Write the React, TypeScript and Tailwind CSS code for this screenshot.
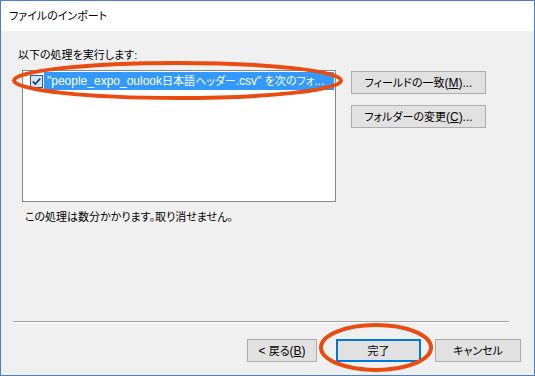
export default function App() {
  return (
    <div className="relative w-[535px] h-[376px] overflow-hidden">
      <div className="flex flex-col w-full h-full border border-[#4a7fc9] bg-[#f0f0f0] text-[11px] text-black font-['Liberation_Sans','Noto_Sans_CJK_JP',sans-serif] [font-feature-settings:'palt']">
        <div className="h-[30px] shrink-0 bg-white flex items-center pl-[8px] leading-[16px]">
          ファイルのインポート
        </div>
        <div className="flex flex-col flex-1 pt-[16px]">
          <div className="pl-[17px] leading-[16px]">以下の処理を実行します:</div>
          <div className="flex mt-[7px] pl-[21px]">
            <div className="w-[314px] h-[132px] shrink-0 bg-white border border-[#828790] pt-[1px] pl-[7px]">
              <div className="flex items-center h-[18px]">
                <svg width="13" height="13" viewBox="0 0 13 13" className="shrink-0">
                  <rect x="0.5" y="0.5" width="12" height="12" fill="#d3e5f8" stroke="#2f5684" />
                  <path d="M2.8 6.4 L5.2 9 L10.2 3.6" fill="none" stroke="#1a3b66" strokeWidth="1.6" />
                </svg>
                <div className="ml-[1px] h-[18px] w-[290px] bg-[#3399ff] text-white leading-[18px] pl-[3px] whitespace-nowrap overflow-hidden">
                  <span className="text-[12px]">"people_expo_oulook</span>日本語ヘッダー<span className="text-[12px]">.csv" </span>を次のフォ<span className="text-[12px]">...</span>
                </div>
              </div>
            </div>
            <div className="flex flex-col ml-[15px] pt-[1px] gap-[11px]">
              <button className="w-[135px] h-[23px] bg-[#e1e1e1] border border-[#adadad] flex items-center justify-center leading-[16px]">
                フィールドの一致<span className="text-[12px]">(<span className="underline">M</span>)...</span>
              </button>
              <button className="w-[135px] h-[23px] bg-[#e1e1e1] border border-[#adadad] flex items-center justify-center leading-[16px]">
                フォルダーの変更<span className="text-[12px]">(<span className="underline">C</span>)...</span>
              </button>
            </div>
          </div>
          <div className="pl-[24px] mt-[7px] leading-[16px]">この処理は数分かかります。取り消せません。</div>
          <div className="flex-1" />
          <div className="ml-[12px] mr-[25px] h-[2px] border-t border-b border-t-[#a0a0a0] border-b-white" />
          <div className="flex justify-end mt-[16px] mb-[13px] pr-[13px]">
            <button className="w-[70px] h-[23px] bg-[#e1e1e1] border border-[#adadad] flex items-center justify-center leading-[16px]">
              <span className="text-[12px]">&lt;&nbsp;</span>戻る<span className="text-[12px]">(<span className="underline">B</span>)</span>
            </button>
            <button className="ml-[19px] w-[85px] h-[23px] bg-[#e1e1e1] border-2 border-[#0078d7] flex items-center justify-center leading-[16px]">
              完了
            </button>
            <button className="ml-[14px] w-[86px] h-[23px] bg-[#e1e1e1] border border-[#adadad] flex items-center justify-center leading-[16px]">
              キャンセル
            </button>
          </div>
        </div>
      </div>
      <svg className="absolute inset-0 pointer-events-none" width="535" height="376" viewBox="0 0 535 376">
        <ellipse cx="177.5" cy="80.5" rx="163.5" ry="17.5" fill="none" stroke="#ea4b10" strokeWidth="4" />
        <ellipse cx="376" cy="347.5" rx="55" ry="22.5" fill="none" stroke="#ea4b10" strokeWidth="4" />
      </svg>
    </div>
  );
}
